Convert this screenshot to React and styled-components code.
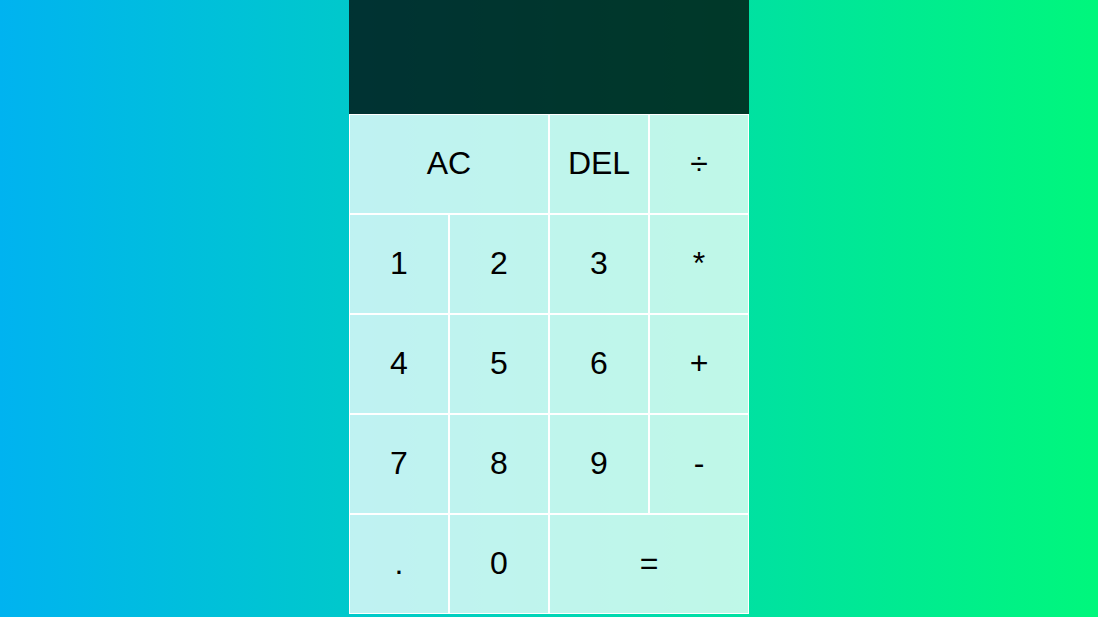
import React from "react";
import styled, { createGlobalStyle } from "styled-components";

const GlobalStyle = createGlobalStyle`
  *, *::before, *::after {
    box-sizing: border-box;
  }
  html, body {
    margin: 0;
    padding: 0;
  }
  body {
    min-height: 100vh;
    background: linear-gradient(to right, #00b3f0, #00f77c);
    font-family: "Liberation Sans", Arial, sans-serif;
  }
`;

function Calculator() {
  const keys = [
    { label: "AC", wide: true },
    { label: "DEL" },
    { label: "÷" },
    { label: "1" },
    { label: "2" },
    { label: "3" },
    { label: "*" },
    { label: "4" },
    { label: "5" },
    { label: "6" },
    { label: "+" },
    { label: "7" },
    { label: "8" },
    { label: "9" },
    { label: "-" },
    { label: "." },
    { label: "0" },
    { label: "=", wide: true },
  ];

  return (
    <Grid>
      <Output>
        <Previous></Previous>
        <Current></Current>
      </Output>
      {keys.map((k) => (
        <Key key={k.label} $wide={k.wide}>
          {k.label}
        </Key>
      ))}
    </Grid>
  );
}

export default function App() {
  return (
    <>
      <GlobalStyle />
      <Calculator />
    </>
  );
}

// STYLE COMPONENT
const Grid = styled.div`
  display: grid;
  justify-content: center;
  align-content: start;
  grid-template-columns: repeat(4, 100px);
  grid-template-rows: 114px repeat(5, 100px);
`;

const Output = styled.div`
  grid-column: 1 / -1;
  background-color: rgba(0, 0, 0, 0.75);
  display: flex;
  flex-direction: column;
  align-items: flex-end;
  justify-content: space-around;
  padding: 10px;
  word-wrap: break-word;
  word-break: break-all;
`;

const Previous = styled.div`
  color: rgba(255, 255, 255, 0.75);
  font-size: 1.5rem;
`;

const Current = styled.div`
  color: white;
  font-size: 2.5rem;
`;

const Key = styled.button`
  cursor: pointer;
  font-family: "Liberation Sans", Arial, sans-serif;
  font-size: 2rem;
  color: #000;
  border: 1px solid white;
  outline: none;
  padding: 0 0 2px;
  background-color: rgba(255, 255, 255, 0.75);
  grid-column: ${(p) => (p.$wide ? "span 2" : "auto")};

  &:hover {
    background-color: rgba(255, 255, 255, 0.9);
  }
`;
